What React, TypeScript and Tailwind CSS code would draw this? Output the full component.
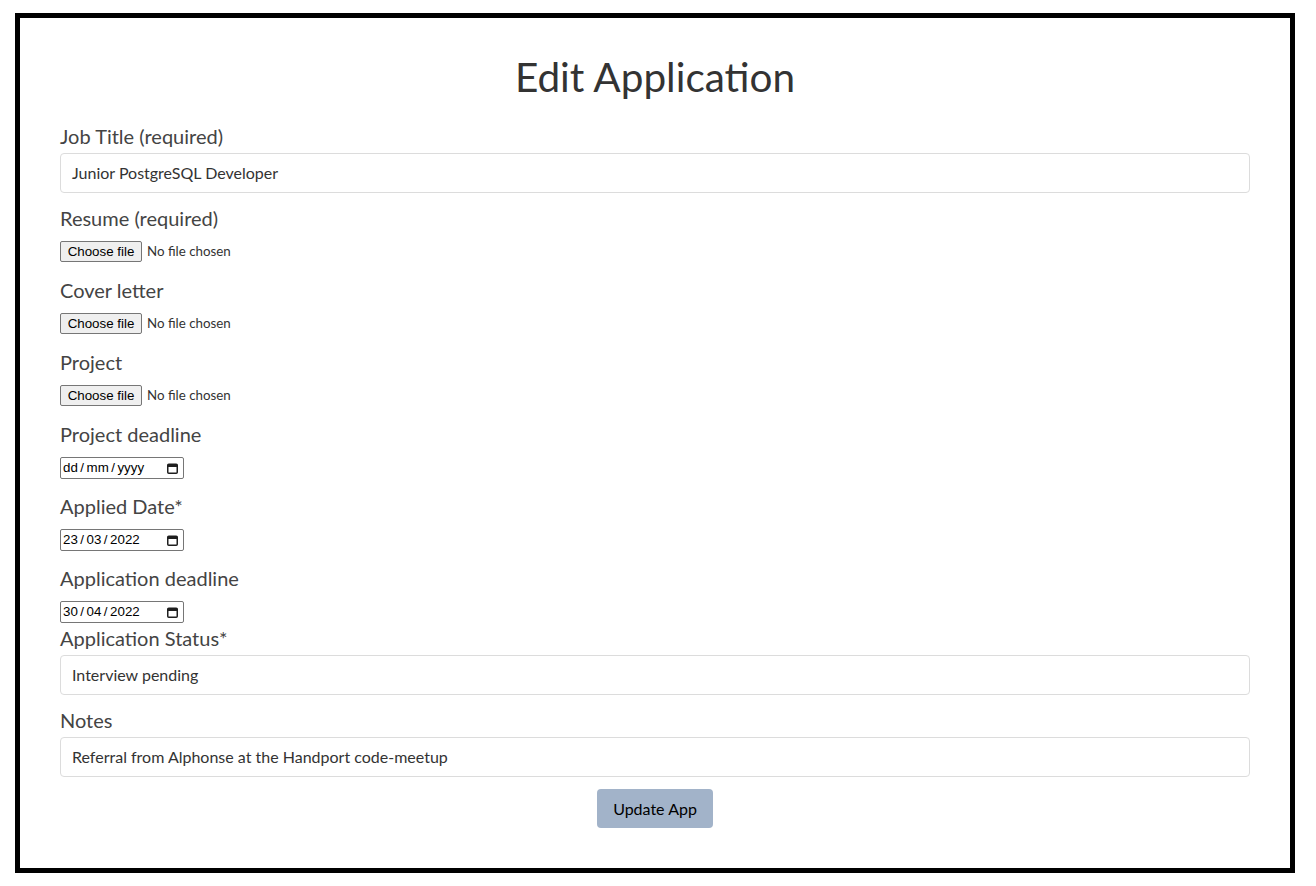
import React from "react";

const lato = "font-['Lato','Noto_Sans',sans-serif]";
const arial = "font-['Liberation_Sans','Arial',sans-serif]";

function CalIcon() {
  return (
    <svg width="11" height="11" viewBox="0 0 11 11" className="shrink-0">
      <rect x="0.75" y="1.25" width="9.5" height="9" rx="1" fill="none" stroke="#1f1f1f" strokeWidth="1.5" />
      <rect x="0.75" y="1.25" width="9.5" height="2.75" fill="#1f1f1f" />
    </svg>
  );
}

function DateBox({ parts }: { parts: [string, string, string] }) {
  return (
    <div
      className={`${arial} flex h-[22px] w-[124px] items-center justify-between rounded-[2px] border border-[#767676] bg-white pl-[2px] pr-[5px] text-[13.33px] text-black`}
    >
      <span className="flex items-center">
        <span>{parts[0]}</span>
        <span className="mx-[2.5px]">/</span>
        <span>{parts[1]}</span>
        <span className="mx-[2.5px]">/</span>
        <span>{parts[2]}</span>
      </span>
      <CalIcon />
    </div>
  );
}

function FileRow({ className }: { className: string }) {
  return (
    <div className={`flex h-[21px] items-center ${className}`}>
      <span
        className={`${arial} flex h-[21px] w-[82px] items-center justify-center rounded-[2px] border border-[#767676] bg-[#efefef] text-[13.33px] text-black`}
      >
        Choose file
      </span>
      <span className={`${lato} ml-[5px] text-[13.33px] text-[#333]`}>No file chosen</span>
    </div>
  );
}

function Label({ children, className }: { children: React.ReactNode; className: string }) {
  return (
    <label className={`${lato} block h-[24px] text-[20px] leading-[24px] text-[#444] ${className}`}>
      {children}
    </label>
  );
}

function TextBox({ value, className }: { value: string; className: string }) {
  return (
    <div
      className={`${lato} flex h-[40px] w-full items-center rounded-[4px] border border-[#dcdcdc] bg-white px-[11px] text-[16px] text-[#333] ${className}`}
    >
      {value}
    </div>
  );
}

export default function App() {
  return (
    <div className="min-h-[886px] w-[1316px] bg-white pl-[15px] pt-[13px]">
      <div className="h-[860px] w-[1280px] border-[5px] border-black px-[40px]">
        <h1 className={`${lato} mt-[34px] h-[50px] text-center text-[40.5px] leading-[50px] text-[#333]`}>
          Edit Application
        </h1>

        <Label className="mt-[22px]">Job Title (required)</Label>
        <TextBox className="mt-[5px]" value="Junior PostgreSQL Developer" />

        <Label className="mt-[13px]">Resume (required)</Label>
        <FileRow className="mt-[11px]" />

        <Label className="mt-[16px]">Cover letter</Label>
        <FileRow className="mt-[11px]" />

        <Label className="mt-[16px]">Project</Label>
        <FileRow className="mt-[11px]" />

        <Label className="mt-[16px]">Project deadline</Label>
        <div className="mt-[11px]">
          <DateBox parts={["dd", "mm", "yyyy"]} />
        </div>

        <Label className="mt-[15px]">Applied Date*</Label>
        <div className="mt-[11px]">
          <DateBox parts={["23", "03", "2022"]} />
        </div>

        <Label className="mt-[15px]">Application deadline</Label>
        <div className="mt-[11px]">
          <DateBox parts={["30", "04", "2022"]} />
        </div>

        <Label className="mt-[3px]">Application Status*</Label>
        <TextBox className="mt-[5px]" value="Interview pending" />

        <Label className="mt-[13px]">Notes</Label>
        <TextBox className="mt-[5px]" value="Referral from Alphonse at the Handport code-meetup" />

        <div className="mt-[12px] flex justify-center">
          <button
            className={`${lato} h-[39px] w-[116px] rounded-[4px] bg-[#a2b3c9] text-[16px] text-black`}
          >
            Update App
          </button>
        </div>
      </div>
    </div>
  );
}
